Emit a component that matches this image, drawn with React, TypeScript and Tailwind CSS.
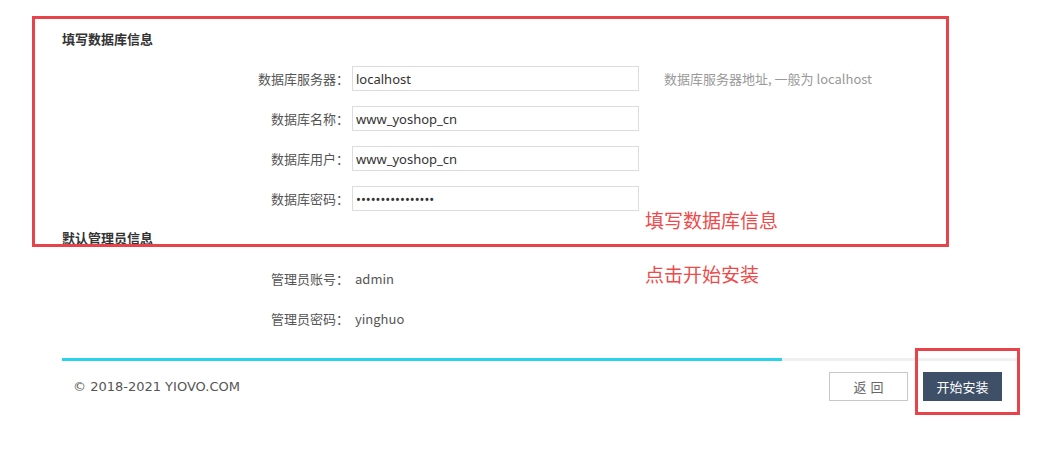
const font = "font-['Microsoft_YaHei','Noto_Sans_CJK_SC','Noto_Sans',sans-serif]"

const dbFields = [
  { label: '数据库服务器：', value: 'localhost', type: 'text', hint: '数据库服务器地址, 一般为 localhost' },
  { label: '数据库名称：', value: 'www_yoshop_cn', type: 'text' },
  { label: '数据库用户：', value: 'www_yoshop_cn', type: 'text' },
  { label: '数据库密码：', value: 'yoshop_password!', type: 'password' },
]

const adminFields = [
  { label: '管理员账号：', value: 'admin' },
  { label: '管理员密码：', value: 'yinghuo' },
]

export default function App() {
  return (
    <div className={`relative w-[1049px] h-[457px] bg-white overflow-hidden ${font}`}>
      <div className="ml-[62px] w-[958px] pt-[31px]">
        {/* Database section */}
        <h3 className="text-[13px] leading-[16px] font-bold text-[#333]">填写数据库信息</h3>
        <div className="mt-[19px] flex flex-col gap-[15px]">
          {dbFields.map((f) => (
            <div key={f.label} className="flex items-center h-[25px]">
              <label className="w-[281px] text-right text-[13px] text-[#555] whitespace-nowrap">
                <span className="relative left-[6px]">{f.label}</span>
              </label>
              <input
                readOnly
                type={f.type}
                value={f.value}
                className="ml-[9px] w-[287px] h-[25px] border border-[#dcdcdc] px-[3px] text-[13px] text-[#333] outline-none font-['Microsoft_YaHei','Noto_Sans',sans-serif]"
              />
              {f.hint && <span className="ml-[25px] text-[13px] text-[#999] whitespace-nowrap">{f.hint}</span>}
            </div>
          ))}
        </div>

        {/* Admin section */}
        <h3 className="mt-[19px] text-[13px] leading-[16px] font-bold text-[#333]">默认管理员信息</h3>
        <div className="mt-[20px] flex flex-col gap-[15px]">
          {adminFields.map((f) => (
            <div key={f.label} className="flex items-center h-[25px]">
              <span className="w-[281px] text-right text-[13px] text-[#555] whitespace-nowrap">
                <span className="relative left-[6px]">{f.label}</span>
              </span>
              <span className="ml-[12px] text-[13px] text-[#555]">{f.value}</span>
            </div>
          ))}
        </div>

        {/* Progress */}
        <div className="mt-[27px] h-[3px] bg-[#f0f0f0] flex">
          <div className="h-full w-[720px] bg-[#29d2ef]" />
        </div>

        {/* Footer */}
        <div className="mt-[11px] flex items-center justify-between pl-[11px] pr-[18px]">
          <span className="text-[13px] text-[#555] font-['DejaVu_Sans',Verdana,sans-serif]">© 2018-2021 YIOVO.COM</span>
          <div className="flex gap-[15px]">
            <button className="w-[79px] h-[29px] border border-[#c8c8c8] bg-white text-[13px] text-[#666] tracking-[4px] pl-[4px]">返回</button>
            <button className="w-[79px] h-[29px] bg-[#3d5068] text-[13px] text-white">开始安装</button>
          </div>
        </div>
      </div>

      {/* Annotations */}
      <div className="absolute left-[32px] top-[16px] w-[917px] h-[231px] border-[3px] border-[#e8434a] pointer-events-none" />
      <div className="absolute left-[915px] top-[348px] w-[105px] h-[67px] border-[3px] border-[#e8434a] pointer-events-none" />
      <span className="absolute left-[645px] top-[207px] text-[19px] leading-[26px] text-[#ee4a4a]">填写数据库信息</span>
      <span className="absolute left-[645px] top-[261px] text-[19px] leading-[26px] text-[#ee4a4a]">点击开始安装</span>
    </div>
  )
}
